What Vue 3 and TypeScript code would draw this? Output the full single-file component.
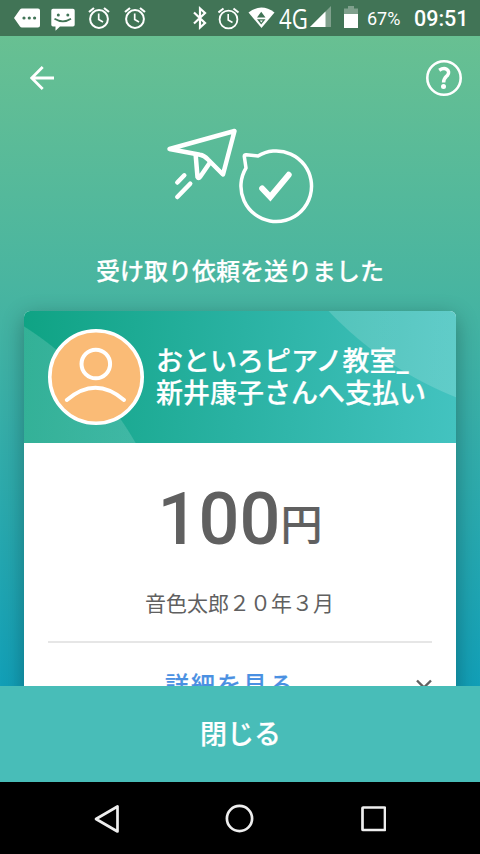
<script setup lang="ts">
import { ref } from 'vue'

const title = ref<string>('受け取り依頼を送りました')
const payeeLines: string[] = ['おといろピアノ教室_', '新井康子さんへ支払い']
const amount = ref<number>(100)
const memo = ref<string>('音色太郎２０年３月')
</script>

<template>
  <div class="screen">
    <header class="status">
      <svg class="tag" width="26" height="20" viewBox="14 8 26 20">
        <path d="M22 8.500H38Q40 8.500 40 10.500V25.500Q40 27.500 38 27.500H22Q20.700 27.500 20 26.500L14 18L20 9.500Q20.700 8.500 22 8.500Z" fill="#fff" />
        <g fill="#417456"><circle cx="24" cy="18" r="1.600" /><circle cx="29.300" cy="18" r="1.600" /><circle cx="34.600" cy="18" r="1.600" /></g>
      </svg>
      <svg class="message" width="24" height="24" viewBox="51 8 24 24">
        <path d="M53 8.700H73Q74.700 8.700 74.700 10.500V24.700Q74.700 26.500 73 26.500H60L55.500 30.800V26.500H53Q51.300 26.500 51.300 24.700V10.500Q51.300 8.700 53 8.700Z" fill="#fff" />
        <g fill="#417456"><circle cx="58.300" cy="15" r="1.500" /><circle cx="67.800" cy="15" r="1.500" /></g>
        <path d="M54.500 18.800Q63 24 71 18.800" fill="none" stroke="#417456" stroke-width="1.700" />
      </svg>
      <svg v-for="n in 2" :key="n" class="alarm" width="22" height="24" viewBox="0 0 22 24">
        <g fill="none" stroke="#fff" stroke-width="2">
          <circle cx="11" cy="13" r="8.900" />
          <path d="M1 6L6 2M21 6L16 2" stroke-width="2.200" />
          <path d="M10.700 7.500V13.500L15 16" stroke-width="1.700" />
        </g>
      </svg>
      <svg class="bluetooth" width="14" height="24" viewBox="0 0 14 24">
        <path d="M1 6.500L12 17L7 21.500V2.500L12 7L1 17.500" fill="none" stroke="#fff" stroke-width="2.200" />
      </svg>
      <svg class="alarm-right" width="22" height="24" viewBox="0 0 22 24">
        <g fill="none" stroke="#fff" stroke-width="1.800">
          <circle cx="10.500" cy="13.500" r="8.900" />
          <path d="M.5 6.500L5.500 2.500M20.500 6.500L15.500 2.500" stroke-width="2" />
          <path d="M10.200 8V14L14.500 16.500" stroke-width="1.600" />
        </g>
      </svg>
      <svg class="wifi" width="27" height="22" viewBox="0 0 27 22">
        <path d="M0.500 5.500Q13.300 -4.300 26.500 5.500L13.500 21Z" fill="#fff" />
        <path d="M9 10.500L13.200 4.700L17.500 10.500ZM9 12.200H17.500L13.200 17.500Z" fill="#417456" />
        <path d="M11.800 13.600H14.800L13.300 15.500Z" fill="#fff" />
      </svg>
      <span class="network">4G</span>
      <svg class="signal" width="21" height="21" viewBox="0 0 21 21">
        <path d="M0 21L21 0V21Z" fill="#7fa08c" /><path d="M0 21L15.500 5.500V21Z" fill="#fff" />
      </svg>
      <svg class="battery" width="14" height="22" viewBox="0 0 14 22">
        <path d="M0 2.500H4V0H10V2.500H14V9H0Z" fill="#7fa08c" /><path d="M0 8H14V22H0Z" fill="#fff" />
      </svg>
      <span class="percent">67%</span>
      <span class="clock">09:51</span>
    </header>

    <main class="content">
      <nav class="toolbar">
        <svg width="26" height="26" viewBox="0 0 26 26">
          <path d="M24 13H2.500M12.700 2L1.700 13L12.700 24" fill="none" stroke="#fff" stroke-width="2.800" />
        </svg>
        <svg width="36" height="36" viewBox="0 0 36 36">
          <circle cx="18" cy="18" r="16.700" fill="none" stroke="#fff" stroke-width="2.600" />
          <path d="M13.200 10.300Q17.500 7.500 20.600 9.200Q24.200 11.600 21.400 15.400C18.800 18 17.600 18.800 17.600 22.400" fill="none" stroke="#fff" stroke-width="3.500" />
          <circle cx="17.500" cy="26.500" r="2.500" fill="#fff" />
        </svg>
      </nav>

      <svg class="hero" width="150" height="100" viewBox="165 126 150 100">
        <g fill="none" stroke="#fff" stroke-width="4.500" stroke-linejoin="round" stroke-linecap="round">
          <path d="M169.500 149L234.500 131L223 174.500L208 159.500Q204 155.300 200 154.700Z" />
          <path d="M195.700 155.500L197.500 177Q198.500 179 200 177L209.300 163.500" />
          <path d="M177.300 182.500L184.300 175.300M177.300 197L190.200 183.700" />
          <path d="M258 156A35.300 35.300 0 1 1 246 168L244.300 156.500Q244.200 154.700 246.200 154.800Z" stroke-width="3.500" />
          <path d="M262.200 188.500L270.300 197L288.700 174.800" stroke-width="6" stroke-linejoin="miter" />
        </g>
      </svg>
      <h1 class="title">{{ title }}</h1>

      <section class="card">
        <div class="card-head">
          <svg class="avatar" width="96" height="96" viewBox="0 0 96 96">
            <circle cx="48" cy="48" r="46.200" fill="#fabb76" stroke="#fff" stroke-width="3.600" />
            <g fill="none" stroke="#fff" stroke-width="4" stroke-linecap="round">
              <circle cx="47.800" cy="35" r="14.300" />
              <path d="M18.800 71Q47.500 46.500 76 71" />
            </g>
          </svg>
          <div class="payee"><div v-for="line in payeeLines" :key="line">{{ line }}</div></div>
        </div>
        <div class="card-body">
          <div class="amount"><span class="number">{{ amount }}</span><span class="yen">円</span></div>
          <div class="memo">{{ memo }}</div>
          <div class="details">
            <span>詳細を見る</span>
            <svg width="16" height="12" viewBox="0 0 16 12">
              <path d="M1 1.500L8 8.500L15 1.500" fill="none" stroke="#606060" stroke-width="2.400" />
            </svg>
          </div>
        </div>
      </section>
    </main>

    <button class="close" type="button">閉じる</button>

    <footer class="navbar">
      <svg width="26" height="30" viewBox="0 0 26 30">
        <path d="M2 15L23.500 2.500V27.500Z" fill="none" stroke="#eee" stroke-width="2.700" stroke-linejoin="round" />
      </svg>
      <svg width="30" height="30" viewBox="0 0 30 30">
        <circle cx="14.500" cy="14.500" r="12.600" fill="none" stroke="#eee" stroke-width="2.700" />
      </svg>
      <svg width="26" height="30" viewBox="0 0 26 30">
        <rect x="2.500" y="3.500" width="22.500" height="22.500" rx=".6" fill="none" stroke="#eee" stroke-width="2.700" />
      </svg>
    </footer>
  </div>
</template>

<style>
body {
  margin: 0;
}
</style>

<style scoped>
.screen {
  width: 480px;
  height: 854px;
  display: flex;
  flex-direction: column;
  overflow: hidden;
  font-family: 'Noto Sans CJK JP', sans-serif;
  color: #606060;
}
svg {
  display: block;
  flex: none;
}
.status {
  height: 36px;
  flex: none;
  display: flex;
  align-items: flex-start;
  background: #417456;
  color: #fff;
  font-family: Roboto, sans-serif;
  white-space: nowrap;
}
.status span {
  flex: none;
}
.tag { margin: 8px 0 0 14px; }
.message { margin: 8px 0 0 11px; }
.alarm { margin: 6px 0 0 13px; }
.alarm + .alarm { margin-left: 14px; }
.bluetooth { margin: 6px 0 0 47px; }
.alarm-right { margin: 6px 0 0 11px; }
.wifi { margin: 7px 0 0 8px; }
.network {
  width: 31px;
  margin: 2px 0 0 4px;
  font: 400 28px/32px 'Open Sans', sans-serif;
  transform: scaleX(.79);
  transform-origin: left;
}
.signal { margin: 6px 0 0; }
.battery { margin: 6px 0 0 13px; }
.percent {
  width: 34px;
  margin: 7px 0 0 9px;
  font-size: 18px;
  line-height: 24px;
}
.clock {
  margin: 6px 0 0 13px;
  font-size: 21.5px;
  font-weight: 500;
  line-height: 26px;
}
.content {
  height: 650px;
  flex: none;
  box-sizing: border-box;
  overflow: hidden;
  padding: 24px 24px 0;
  display: flex;
  flex-direction: column;
  background: linear-gradient(180deg, #68c092 0%, #49b5a0 38%, #129fb7 100%);
}
.toolbar {
  height: 36px;
  flex: none;
  display: flex;
  align-items: center;
  justify-content: space-between;
  margin: 0 -6px 0 6px;
}
.hero {
  margin: 30px 0 0 141px;
}
.title {
  margin: 27px 0 0;
  font-size: 24px;
  line-height: 34px;
  font-weight: 500;
  text-align: center;
  color: #fff;
  -webkit-text-stroke: .2px;
}
.card {
  height: 480px;
  flex: none;
  margin-top: 24px;
  border-radius: 6px;
  overflow: hidden;
  background: #fff;
  box-shadow: 0 6px 22px rgba(0, 0, 0, .3);
}
.card-head {
  height: 132px;
  box-sizing: border-box;
  padding: 0 24px;
  display: flex;
  align-items: center;
  gap: 12px;
  background:
    radial-gradient(circle at -180.5px 300px, rgba(255, 255, 255, .15) 336.500px, transparent 337.500px),
    radial-gradient(circle at 564px -246px, rgba(255, 255, 255, .16) 357px, transparent 358px),
    linear-gradient(95deg, #0fa384 0%, #2ab2a3 50%, #43c3c0 100%);
}
.payee {
  padding-top: 1px;
  font-family: Roboto, 'Noto Sans CJK JP', sans-serif;
  font-size: 27px;
  line-height: 32px;
  font-weight: 500;
  color: #fff;
  white-space: nowrap;
  -webkit-text-stroke: .2px;
}
.card-body {
  padding: 32px 24px 0;
}
.amount {
  height: 90px;
  display: flex;
  align-items: flex-start;
  justify-content: center;
}
.number {
  font: 500 72px/90px Roboto, sans-serif;
}
.yen {
  margin-top: 5px;
  font-size: 42px;
  line-height: 84px;
  font-weight: 500;
  -webkit-text-stroke: .2px;
}
.memo {
  margin-top: 22px;
  font-size: 21px;
  line-height: 30px;
  text-align: center;
  text-indent: -1px;
}
.details {
  display: flex;
  align-items: center;
  margin-top: 24px;
  padding-top: 21px;
  border-top: 2px solid #e6e6e6;
  font-size: 24px;
  line-height: 40px;
  font-weight: 500;
  letter-spacing: 2px;
  color: #4a90e2;
  -webkit-text-stroke: .2px;
}
.details span {
  flex: 1;
  padding-left: 117px;
}
.details svg {
  margin-top: 2px;
}
.close {
  height: 96px;
  flex: none;
  border: 0;
  padding: 0 0 2px 1px;
  background: #48bdb8;
  color: #fff;
  font: 500 27px/40px 'Noto Sans CJK JP', sans-serif;
  -webkit-text-stroke: .2px;
}
.navbar {
  height: 72px;
  flex: none;
  box-sizing: border-box;
  display: flex;
  align-items: center;
  justify-content: space-between;
  padding: 1px 94px 0 94px;
  background: #000;
}
</style>
